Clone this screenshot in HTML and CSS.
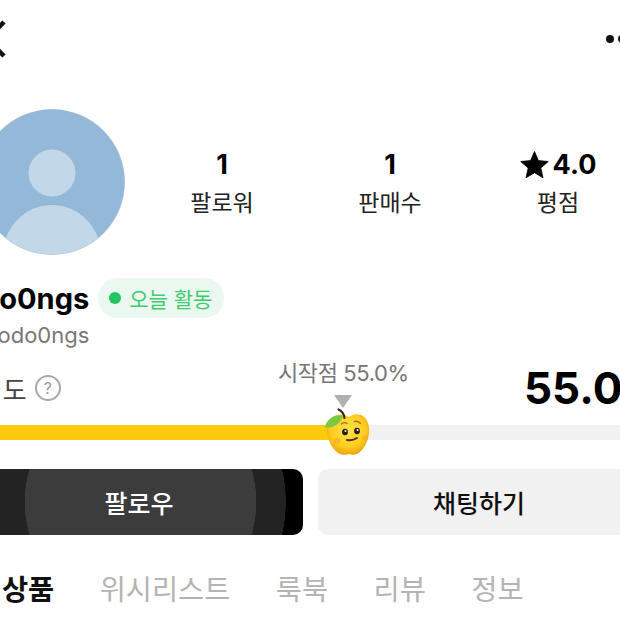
FILE: index.html
```html
<!DOCTYPE html>
<html>
<head>
  <meta charset="utf-8">
  <title>dodo0ngs</title>
  <link rel="stylesheet" href="styles.css">
</head>
<body>
  <div class="page">
    <div class="topbar">
      <svg class="back" width="40" height="50" viewBox="0 0 40 50"><path d="M33 8 L16 25 L33 42" fill="none" stroke="#111" stroke-width="4.5"/></svg>
      <div class="dots"><i></i><i></i><i></i></div>
    </div>

    <div class="profile">
      <svg class="avatar" width="146" height="146" viewBox="0 0 146 146">
        <defs><clipPath id="round"><circle cx="73" cy="73" r="72.5"/></clipPath></defs>
        <circle cx="73" cy="73" r="73" fill="#c6d3dc"/>
        <g clip-path="url(#round)">
          <rect width="146" height="146" fill="#93b8d8"/>
          <circle cx="73" cy="64" r="23.5" fill="#c2d8e9"/>
          <ellipse cx="73" cy="146" rx="49" ry="50" fill="#c2d8e9"/>
        </g>
      </svg>
      <div class="stats">
        <div class="stat"><div class="num">1</div><div class="cap">팔로워</div></div>
        <div class="stat"><div class="num">1</div><div class="cap">판매수</div></div>
        <div class="stat">
          <div class="num">
            <svg class="star" width="29" height="28" viewBox="0 0 29 28"><path d="M14.5 0.5 L18.4 9.6 L28.3 10.5 L20.8 17 L23 26.8 L14.5 21.7 L6 26.8 L8.2 17 L0.7 10.5 L10.6 9.6 Z" fill="#000" stroke="#000" stroke-width="0.8" stroke-linejoin="round"/></svg>
            4.0
          </div>
          <div class="cap">평점</div>
        </div>
      </div>
    </div>

    <div class="name-row">
      <span class="name">do0ngs</span>
      <span class="badge"><i class="dot"></i>오늘 활동</span>
    </div>
    <div class="handle">dodo0ngs</div>

    <div class="gauge-head">
      <div class="gauge-label">
        신뢰도
        <span class="help">?</span>
      </div>
      <div class="start">시작점 55.0%</div>
      <div class="score">55.0%</div>
    </div>

    <div class="gauge">
      <div class="fill" style="width: 368px"></div>
      <i class="marker"></i>
      <svg class="apple" width="48" height="48" viewBox="0 0 48 48">
        <defs>
          <radialGradient id="skin" cx="0.5" cy="0.4" r="0.62">
            <stop offset="0" stop-color="#ffe34d"/>
            <stop offset="0.65" stop-color="#fdcd1f"/>
            <stop offset="1" stop-color="#eda00e"/>
          </radialGradient>
        </defs>
        <path d="M26 9 C32 4 44 5 46 19 C47.500 30 41 43 34 46 C31 47.500 28 46.500 26 46 C24 46.500 20 47.500 17 46 C10 43 3 31 4 19 C6 6 20 4 26 9 Z" fill="url(#skin)"/>
        <path d="M21.500 10 C21 6 19 3 15.500 1.500" fill="none" stroke="#3b2a1a" stroke-width="2.200" stroke-linecap="round"/>
        <path d="M2 19 C4 11 11 6 20 7.500 C18.500 15 10 21 2 19 Z" fill="#7cc740"/>
        <ellipse cx="22" cy="24" rx="2.900" ry="3.200" fill="#2a1c10"/>
        <ellipse cx="34" cy="23" rx="2.900" ry="3.200" fill="#2a1c10"/>
        <circle cx="22.500" cy="23" r="1" fill="#fff"/>
        <circle cx="34.500" cy="22" r="1" fill="#fff"/>
        <path d="M18.500 16 C20 14.500 22.500 14.500 24 15.500" fill="none" stroke="#a8700f" stroke-width="1.400" stroke-linecap="round"/>
        <path d="M31.500 13.500 C33.500 13 36 13.500 37.500 15.500" fill="none" stroke="#a8700f" stroke-width="1.400" stroke-linecap="round"/>
        <path d="M24 32 C27.500 32.800 31 32 34 30" fill="none" stroke="#5a2c12" stroke-width="2" stroke-linecap="round"/>
        <ellipse cx="14" cy="33" rx="3.500" ry="2.800" fill="#f5a62a" opacity="0.6"/>
        <ellipse cx="42" cy="30" rx="3" ry="2.800" fill="#f5a62a" opacity="0.6"/>
      </svg>
    </div>

    <div class="actions">
      <button class="btn follow">팔로우</button>
      <button class="btn chat">채팅하기</button>
    </div>

    <div class="tabs">
      <span class="tab active">상품</span>
      <span class="tab">위시리스트</span>
      <span class="tab">룩북</span>
      <span class="tab">리뷰</span>
      <span class="tab">정보</span>
    </div>
  </div>
</body>
</html>
```

FILE: styles.css
```css
html, body { margin: 0; height: 100%; overflow: hidden; background: #fff; }
body { font-family: Inter, "Noto Sans CJK KR", sans-serif; color: #111; }
.page { width: 661px; margin-left: -21px; }

.topbar { height: 78px; display: flex; align-items: center; justify-content: space-between; }
.back { margin-left: -8px; }
.dots { display: flex; gap: 4px; margin-right: 2px; }
.dots i { width: 8px; height: 8px; border-radius: 50%; background: #111; }

.profile { display: flex; margin-top: 31px; }
.avatar { flex: none; display: block; }
.stats { display: grid; grid-template-columns: repeat(3, 168px); margin-left: 13px; padding-top: 39px; text-align: center; }
.num { height: 34px; line-height: 34px; font-size: 27px; font-weight: 700; color: #000; display: flex; justify-content: center; align-items: center; gap: 4px; }
.cap { margin-top: 4px; font-size: 23px; line-height: 34px; color: #222; }

.name-row { display: flex; align-items: center; margin-top: 23px; height: 40px; }
.name { font-size: 29px; font-weight: 700; color: #000; margin-left: 2px; }
.badge { display: flex; align-items: center; height: 40px; margin-left: 9px; padding: 0 12px 0 11px; border-radius: 20px; background: #eaf8ef; color: #3fcb70; font-size: 21px; }
.dot { width: 12px; height: 12px; border-radius: 50%; background: #22c55e; margin-right: 8px; }
.handle { margin: 1px 0 0 5px; font-size: 22px; line-height: 32px; color: #777; }

.gauge-head { position: relative; display: flex; align-items: center; justify-content: space-between; height: 60px; margin-top: 7px; }
.gauge-label { display: flex; align-items: center; font-size: 26px; color: #444; margin-left: -24px; }
.help { width: 22px; height: 22px; margin-left: 8px; border: 2px solid #aaa; border-radius: 50%; color: #999; font-size: 16px; line-height: 22px; text-align: center; }
.start { position: absolute; left: 299px; top: -3px; font-size: 22px; letter-spacing: -0.4px; color: #777; }
.score { font-size: 44px; font-weight: 700; color: #000; margin-right: -27px; }

.gauge { position: relative; height: 15px; margin-top: 7px; background: #f1f1f1; }
.fill { height: 100%; background: #fdcb0e; }
.marker { position: absolute; left: 355px; top: -30px; border: 9px solid transparent; border-top: 13px solid #b0b0b0; border-bottom: 0; }
.apple { position: absolute; left: 344px; top: -17px; }

.actions { display: grid; grid-template-columns: 324px 322px; gap: 15px; margin-top: 29px; }
.btn { height: 66px; border: 0; border-radius: 10px; font-family: inherit; font-size: 25px; font-weight: 500; }
.follow { color: #fff; padding: 0 4px 0 0; background: radial-gradient(circle at 161.500px 33px, #3c3c3c 115.500px, #232323 116px, #232323 145px, #000 145.500px); }
.chat { color: #111; background: #f1f1f1; }

.tabs { display: flex; gap: 45.500px; margin: 34px 0 0 23px; font-size: 28.400px; line-height: 42px; color: #b4b4b4; }
.tab.active { color: #111; font-weight: 700; }
```
